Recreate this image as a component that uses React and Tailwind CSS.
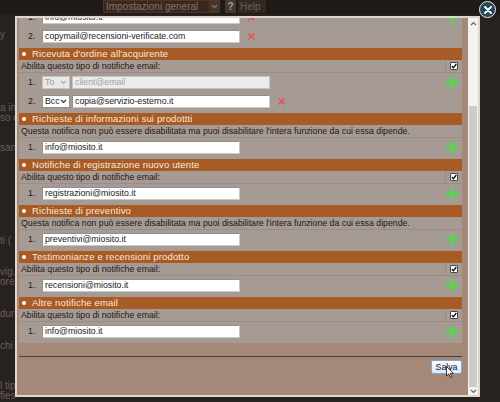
import React from 'react';

// ---------------------------------------------------------------------------
// Small drawn bits: remove cross, add plus, checkbox, scrollbar chevrons
// ---------------------------------------------------------------------------
function RemoveX() {
  return (
    <svg width="7" height="7" viewBox="0 0 7 7" className="ml-[8px] shrink-0">
      <path d="M1 1L6 6M6 1L1 6" stroke="#ec4f55" strokeWidth="1.7" strokeLinecap="round" />
    </svg>
  );
}

function AddPlus() {
  return (
    <svg width="13" height="13" viewBox="0 0 13 13" className="ml-auto mr-[1px] shrink-0">
      <path d="M6.5 0V13M0 6.5H13" stroke="#58d44f" strokeWidth="3" />
    </svg>
  );
}

function CheckBox() {
  return (
    <div className="w-[8px] h-[8px] bg-white border border-[#4a4a4a] rounded-[1px] flex items-center justify-center">
      <svg width="6" height="6" viewBox="0 0 6 6">
        <path d="M0.8 3.2L2.4 4.8L5.3 1" stroke="#111" strokeWidth="1.4" fill="none" />
      </svg>
    </div>
  );
}

function Chevron({ up, color = '#666' }) {
  return (
    <svg width="7" height="5" viewBox="0 0 7 5">
      <path d={up ? 'M1 4L3.5 1.5L6 4' : 'M1 1L3.5 3.5L6 1'} stroke={color} strokeWidth="1.2" fill="none" />
    </svg>
  );
}

// ---------------------------------------------------------------------------
// Rows of the notification settings list
// ---------------------------------------------------------------------------
function SectionHeader({ title }) {
  return (
    <div className="h-[12px] bg-[#a95b26] flex items-center pl-[3px] text-[#f7e8da] text-[9.5px] tracking-[0.15px]">
      <span className="w-[4px] h-[4px] rounded-full bg-white mr-[6px]" />
      {title}
    </div>
  );
}

function ToggleRow() {
  return (
    <div className="h-[13px] flex border-b border-[#9a8d85]">
      <div className="flex-1 flex items-center pl-[2px] border-r border-[#988b83]">
        Abilita questo tipo di notifiche email:
      </div>
      <div className="w-[16px] flex items-center justify-center">
        <CheckBox />
      </div>
    </div>
  );
}

function NoteRow() {
  return (
    <div className="h-[13px] flex items-center pl-[2px] border-b border-[#9a8d85]">
      Questa notifica non può essere disabilitata ma puoi disabilitare l'intera funzione da cui essa dipende.
    </div>
  );
}

function EmailRow({ n, value, remove, plus }) {
  return (
    <div className="h-[19px] flex items-center pl-[9px] pr-[2px]">
      <span className="w-[14px]">{n}.</span>
      <div className="w-[198px] h-[13px] bg-white border border-[#8f8f8f] border-b-[#c8c8c8] border-r-[#c8c8c8] flex items-center pl-[2px] text-[#1a1a1a]">
        {value}
      </div>
      {remove && <RemoveX />}
      {plus && <AddPlus />}
    </div>
  );
}

function SelectRow({ n, kind, value, disabled, remove, plus }) {
  return (
    <div className="h-[19px] flex items-center pl-[9px] pr-[2px]">
      <span className="w-[14px]">{n}.</span>
      <div
        className={
          disabled
            ? 'w-[28px] h-[13px] bg-[#e9e9e9] border border-[#c4c4c4] flex items-center justify-between px-[2px] text-[#9d9d9d]'
            : 'w-[28px] h-[13px] bg-white border border-[#8f8f8f] flex items-center justify-between px-[2px] text-[#1a1a1a]'
        }
      >
        {kind}
        <Chevron color={disabled ? '#a8a8a8' : '#333'} />
      </div>
      <div
        className={
          disabled
            ? 'ml-[2px] w-[198px] h-[13px] bg-[#ececec] border border-[#c4c4c4] flex items-center pl-[2px] text-[#a2a2a2]'
            : 'ml-[2px] w-[198px] h-[13px] bg-white border border-[#8f8f8f] border-b-[#c8c8c8] border-r-[#c8c8c8] flex items-center pl-[2px] text-[#1a1a1a]'
        }
      >
        {value}
      </div>
      {remove && <RemoveX />}
      {plus && <AddPlus />}
    </div>
  );
}

// ---------------------------------------------------------------------------
// App
// ---------------------------------------------------------------------------
export default function App() {
  return (
    <div className="relative w-[500px] h-[402px] overflow-hidden bg-[#28221f] font-['Liberation_Sans',Arial,sans-serif] text-[8.75px] leading-none text-[#1d1916]">
      {/* Page behind the overlay */}
      <div className="h-[14px] bg-[#1f1a17] flex items-start pl-[103px]">
        <div className="w-[117px] h-[13px] bg-[#3a281e] border border-[#4b3629] flex items-center pl-[2px] text-[10px]">
          <span className="flex-1 text-[#857266]">Impostazioni general</span>
          <span className="w-[10px] h-full bg-[#46342a] flex items-center justify-center">
            <Chevron color="#8a7668" />
          </span>
        </div>
        <div className="ml-[5px] w-[11px] h-[13px] bg-[#443a34] flex items-center justify-center text-[#a89b90] text-[10px] font-bold">?</div>
        <div className="ml-[2px] w-[28px] h-[13px] bg-[#312824] flex items-center pl-[2px] text-[#6d6058] text-[10px]">Help</div>
      </div>
      <div className="w-[15px] flex flex-col text-[10px] leading-[10px] text-[#685e57] whitespace-nowrap overflow-hidden">
        <div className="mt-[16px]">y</div>
        <div className="mt-[63px]">a in</div>
        <div>so d</div>
        <div className="mt-[20px]">san</div>
        <div className="mt-[83px]">ti (</div>
        <div className="mt-[21px]">vig.</div>
        <div>ore.</div>
        <div className="mt-[22px]">dur</div>
        <div className="mt-[22px]">chi</div>
        <div className="mt-[30px]">l tip</div>
        <div>fies</div>
      </div>

      {/* Modal */}
      <div className="absolute left-[15px] top-[16px] w-[465px] h-[381px] border-2 border-[#ddd6d0] bg-[#a48979] flex">
        <div className="flex-1 pl-[2px] pr-[6px] overflow-hidden flex flex-col">
          <div className="-mt-[10px] bg-[#a69b94]">
            <div className="pb-[2px]">
              <EmailRow n={1} value="info@miosito.it" remove plus />
              <EmailRow n={2} value="copymail@recensioni-verificate.com" remove />
            </div>
            <div className="pb-[2px]">
              <SectionHeader title="Ricevuta d'ordine all'acquirente" />
              <ToggleRow />
              <SelectRow n={1} kind="To" value="client@email" disabled plus />
              <SelectRow n={2} kind="Bcc" value="copia@servizio-esterno.it" remove />
            </div>
            <div className="pb-[2px]">
              <SectionHeader title="Richieste di informazioni sui prodottti" />
              <NoteRow />
              <EmailRow n={1} value="info@miosito.it" plus />
            </div>
            <div className="pb-[2px]">
              <SectionHeader title="Notifiche di registrazione nuovo utente" />
              <ToggleRow />
              <EmailRow n={1} value="registrazioni@miosito.it" plus />
            </div>
            <div className="pb-[2px]">
              <SectionHeader title="Richieste di preventivo" />
              <NoteRow />
              <EmailRow n={1} value="preventivi@miosito.it" plus />
            </div>
            <div className="pb-[2px]">
              <SectionHeader title="Testimonianze e recensioni prodotto" />
              <ToggleRow />
              <EmailRow n={1} value="recensioni@miosito.it" plus />
            </div>
            <div className="pb-[2px]">
              <SectionHeader title="Altre notifiche email" />
              <ToggleRow />
              <EmailRow n={1} value="info@miosito.it" plus />
            </div>
          </div>

          {/* Footer */}
          <div className="mt-[13px] border-t border-[#4a3d35]" />
          <div className="mt-[3px] flex justify-end">
            <div className="relative w-[31px] h-[14px] border border-[#7ea8d6] rounded-[2px] bg-gradient-to-b from-[#fbfdff] to-[#dbe9f7] flex items-center justify-center text-[#141414]">
              Salva
              <svg width="8" height="12" viewBox="0 0 8 12" className="absolute left-[14px] top-[5px]">
                <path d="M0.5 0.5V10L2.8 7.8L4.4 11.3L5.8 10.7L4.3 7.3H7.4Z" fill="#fff" stroke="#111" strokeWidth="0.8" />
              </svg>
            </div>
          </div>
        </div>

        {/* Scrollbar */}
        <div className="w-[10px] bg-[#f2f2f2] flex flex-col">
          <div className="h-[10px] flex items-center justify-center">
            <Chevron up />
          </div>
          <div className="h-[78px]" />
          <div className="h-[281px] mx-[1px] bg-[#cbcbcb]" />
          <div className="h-[8px] flex items-center justify-center">
            <Chevron />
          </div>
        </div>
      </div>

      {/* Close button */}
      <div className="absolute left-[479px] top-[1px] w-[17px] h-[17px] rounded-full bg-[#23495a] border-[1.5px] border-[#e8eef0] flex items-center justify-center">
        <svg width="8" height="8" viewBox="0 0 8 8">
          <path d="M1 1L7 7M7 1L1 7" stroke="#fff" strokeWidth="1.8" strokeLinecap="round" />
        </svg>
      </div>
    </div>
  );
}
